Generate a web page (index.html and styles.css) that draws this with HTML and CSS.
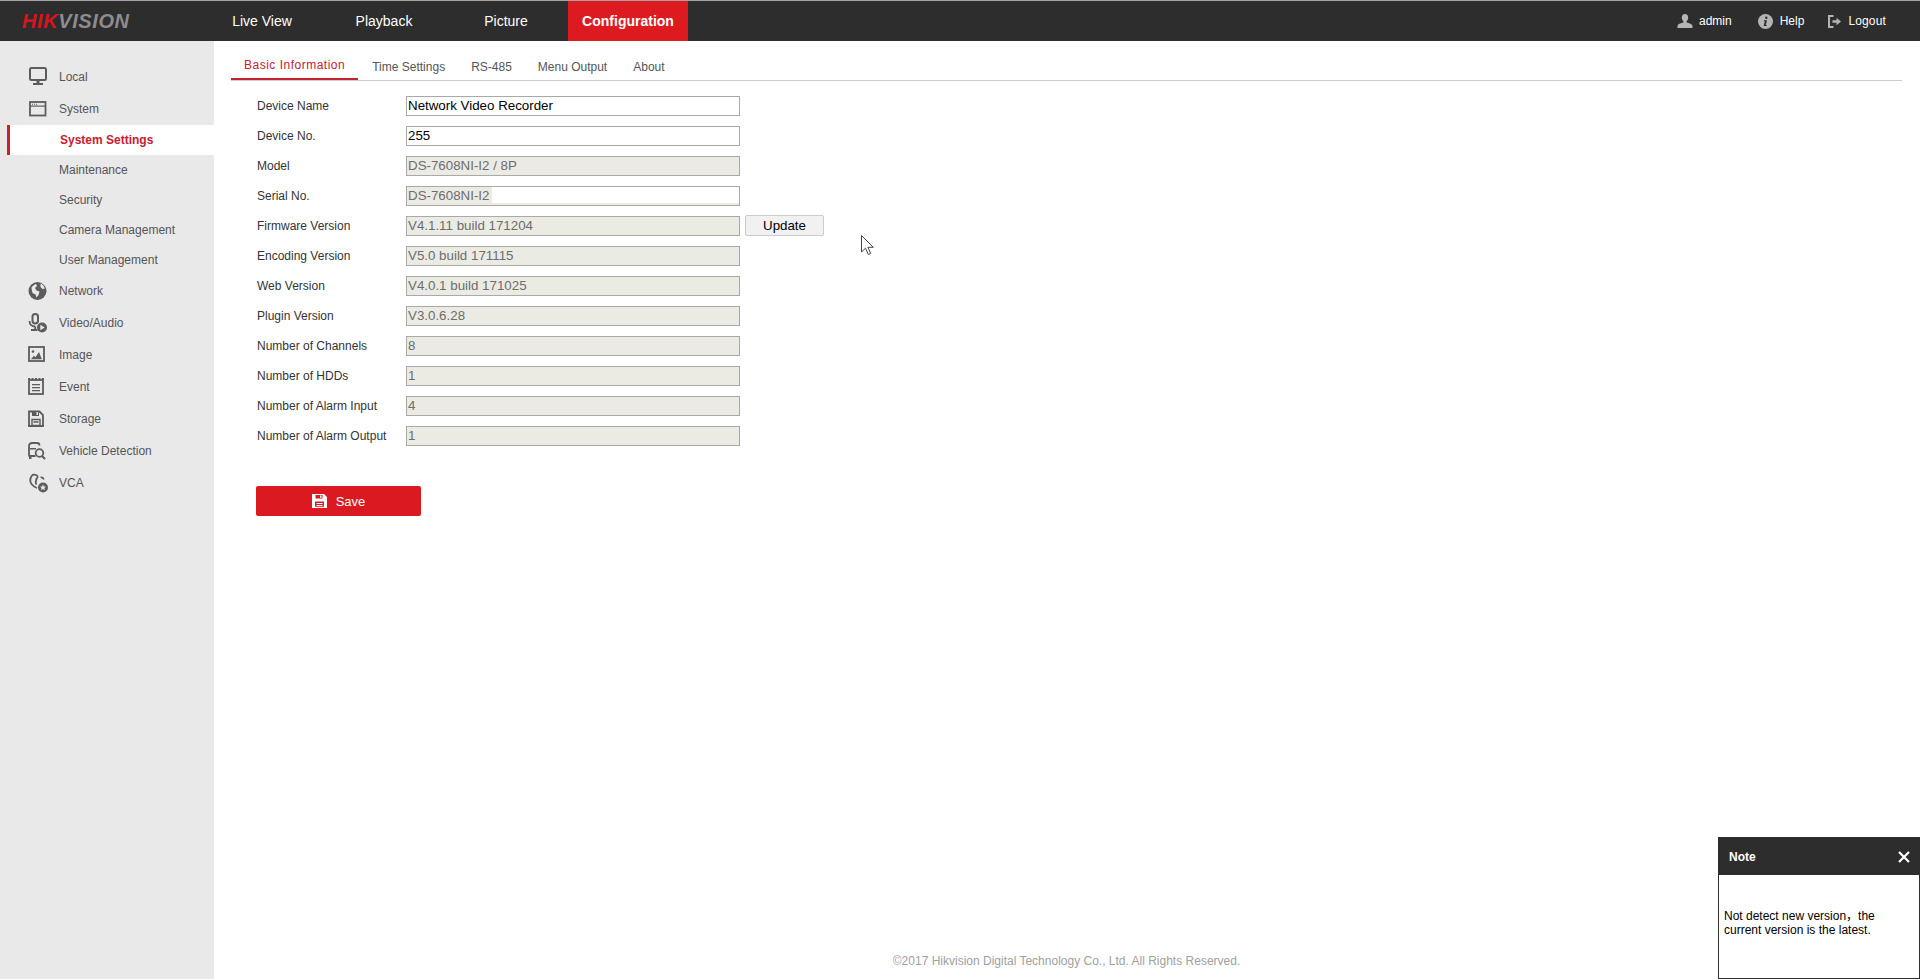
FILE: index.html
```html
<!DOCTYPE html>
<html lang="en">
<head>
<meta charset="utf-8">
<title>Configuration</title>
<link rel="stylesheet" href="styles.css">
</head>
<body>
<header class="topbar">
  <div class="logo"><span class="logo-red">HIK</span><span class="logo-grey">VISION</span></div>
  <nav class="mainnav">
    <a class="mainnav-item">Live View</a>
    <a class="mainnav-item">Playback</a>
    <a class="mainnav-item">Picture</a>
    <a class="mainnav-item mainnav-active">Configuration</a>
  </nav>
  <div class="usernav">
    <span class="usernav-item usernav-admin">
      <svg class="usernav-icon" width="16" height="14" viewBox="0 0 16 14"><path fill="#b4b4b4" d="M8 0c2 0 3.2 1.5 3.2 3.6 0 1.6-.7 3-1.6 3.7v1.1c2.6.8 5.9 1.6 5.9 3.6v2H.5v-2c0-2 3.300-2.800 5.900-3.600V7.300C5.500 6.600 4.800 5.200 4.800 3.600 4.800 1.500 6 0 8 0z"/></svg>admin
    </span>
    <span class="usernav-item usernav-help">
      <svg class="usernav-icon" width="15" height="15" viewBox="0 0 15 15"><circle cx="7.500" cy="7.500" r="7.500" fill="#b4b4b4"/><circle cx="8.300" cy="3.800" r="1.200" fill="#2d2d2d"/><path fill="#2d2d2d" d="M6 6.200h3l-1.200 4.700h1L8.500 12H5.700l1.100-4.800h-1z"/></svg>Help
    </span>
    <span class="usernav-item usernav-logout">
      <svg class="usernav-icon" width="13" height="13" viewBox="0 0 13 13"><path fill="none" stroke="#b4b4b4" stroke-width="2" d="M5.500 1H1v11h4.500"/><path fill="#b4b4b4" d="M4.500 5.200h4V2.800l4.500 3.700-4.500 3.700V7.800h-4z"/></svg>Logout
    </span>
  </div>
</header>
<div class="layout">
  <aside class="sidebar">
    <a class="side-item">
      <svg class="side-icon" width="20" height="20" viewBox="0 0 20 20"><rect x="2" y="1" width="16" height="12" rx="1.500" fill="none" stroke="#5c5c5c" stroke-width="2"/><path fill="#5c5c5c" d="M8.500 14h3v2h-3zM5 16h10v2H5z"/></svg>
      Local
    </a>
    <a class="side-item">
      <svg class="side-icon" width="20" height="20" viewBox="0 0 20 20"><rect x="2" y="3" width="15.500" height="13.500" fill="none" stroke="#5c5c5c" stroke-width="1.800"/><path fill="#5c5c5c" d="M2 6.500h16v1.200H2z"/><path fill="#5c5c5c" d="M4 4.800h1v1H4zM6 4.800h1v1H6zM8 4.800h1v1H8z"/></svg>
      System
    </a>
    <a class="side-sub side-sub-active">System Settings</a>
    <a class="side-sub">Maintenance</a>
    <a class="side-sub">Security</a>
    <a class="side-sub">Camera Management</a>
    <a class="side-sub">User Management</a>
    <a class="side-item">
      <svg class="side-icon" width="20" height="20" viewBox="0 0 20 20"><circle cx="9.500" cy="10" r="9" fill="#5c5c5c"/><path fill="#e9e9e9" d="M3.500 6.500c1.500-2 3-3 4.500-3.500l1 2-2 2 1.500 2.500 3 1-1 3.500-2 2.500-1-3-3-1.500-.8-3.500zM12.500 2.500l2.500 1.500 2 3.500-2.500.5-2-2z"/></svg>
      Network
    </a>
    <a class="side-item">
      <svg class="side-icon" width="20" height="20" viewBox="0 0 20 20"><rect x="4.500" y="1" width="5.500" height="9.500" rx="2.700" fill="none" stroke="#5c5c5c" stroke-width="2"/><path fill="none" stroke="#5c5c5c" stroke-width="1.800" d="M1.500 8c0 3.500 2.500 5.500 5.700 5.500M7.200 13.500v2.500M3 17h6.500"/><circle cx="14" cy="14.500" r="5" fill="#5c5c5c"/><path fill="#e9e9e9" d="M12.300 11.800l4.400 2.700-4.400 2.700z"/></svg>
      Video/Audio
    </a>
    <a class="side-item">
      <svg class="side-icon" width="20" height="20" viewBox="0 0 20 20"><rect x="1" y="2" width="15" height="14" fill="none" stroke="#5c5c5c" stroke-width="1.800"/><circle cx="5" cy="6.500" r="1.300" fill="#5c5c5c"/><path fill="#5c5c5c" d="M2.800 14.200l3.200-3.500 1.500 1.500 3.500-5.200 2.800 7.200z"/></svg>
      Image
    </a>
    <a class="side-item">
      <svg class="side-icon" width="20" height="20" viewBox="0 0 20 20"><rect x="1" y="3" width="14" height="14" fill="none" stroke="#5c5c5c" stroke-width="1.800"/><path fill="#5c5c5c" d="M.1 1h2v2h-2zM3.500 1h2v2h-2zM7 1h2v2H7zM10.500 1h2v2h-2zM13.900 1h2v2h-2zM4 7h8v1.300H4zM4 10h8v1.300H4zM4 13h8v1.300H4z"/></svg>
      Event
    </a>
    <a class="side-item">
      <svg class="side-icon" width="20" height="20" viewBox="0 0 20 20"><path fill="none" stroke="#5c5c5c" stroke-width="1.800" d="M1 2.500h10.500l3.500 3.500v11H1z"/><path fill="#5c5c5c" d="M4 2h7v5H4z"/><path fill="#e9e9e9" d="M8.500 3H10v3H8.500z"/><path fill="none" stroke="#5c5c5c" stroke-width="1.400" d="M4 10.500h8v6H4zM5.500 13h5"/></svg>
      Storage
    </a>
    <a class="side-item">
      <svg class="side-icon" width="20" height="20" viewBox="0 0 20 20"><path fill="none" stroke="#5c5c5c" stroke-width="1.800" d="M1 14.500V5c0-2 1.500-3 3-3h5c1.500 0 2.500 1 2.500 2.500"/><path fill="#5c5c5c" d="M2 7h6v1.500H2zM.5 14h7v2h-7zM1 16h2.500v2H1z"/><circle cx="11.500" cy="12" r="3.800" fill="none" stroke="#5c5c5c" stroke-width="1.800"/><path stroke="#5c5c5c" stroke-width="2" d="M14 15l3 3"/></svg>
      Vehicle Detection
    </a>
    <a class="side-item">
      <svg class="side-icon" width="20" height="20" viewBox="0 0 20 20"><path fill="none" stroke="#5c5c5c" stroke-width="1.800" d="M10 3.500C8 1.500 5 1 4 2.500 2.500 4.500 1.500 8 3.500 11c1.500 2 4 3.500 5.500 4M12.500 4.500c1.500-.5 3 .5 3 2M10 3.500C8 6 7 9 8.500 11.500"/><circle cx="15" cy="14.500" r="5" fill="#5c5c5c"/><path fill="#e9e9e9" d="M15 11.500l.9 2 2.200.2-1.700 1.400.6 2.200-2-1.200-2 1.200.6-2.200-1.700-1.400 2.200-.2z"/></svg>
      VCA
    </a>
  </aside>
  <main class="content">
    <div class="tabs">
      <a class="tab tab-active">Basic Information</a>
      <a class="tab">Time Settings</a>
      <a class="tab">RS-485</a>
      <a class="tab">Menu Output</a>
      <a class="tab">About</a>
    </div>
    <form class="form">
      <div class="row"><span class="label">Device Name</span><div class="field">Network Video Recorder</div></div>
      <div class="row"><span class="label">Device No.</span><div class="field">255</div></div>
      <div class="row"><span class="label">Model</span><div class="field field-off">DS-7608NI-I2 / 8P</div></div>
      <div class="row"><span class="label">Serial No.</span><div class="field field-serial"><span class="field-serial-text">DS-7608NI-I2</span></div></div>
      <div class="row"><span class="label">Firmware Version</span><div class="field field-off">V4.1.11 build 171204</div><button class="update" type="button">Update</button></div>
      <div class="row"><span class="label">Encoding Version</span><div class="field field-off">V5.0 build 171115</div></div>
      <div class="row"><span class="label">Web Version</span><div class="field field-off">V4.0.1 build 171025</div></div>
      <div class="row"><span class="label">Plugin Version</span><div class="field field-off">V3.0.6.28</div></div>
      <div class="row"><span class="label">Number of Channels</span><div class="field field-off">8</div></div>
      <div class="row"><span class="label">Number of HDDs</span><div class="field field-off">1</div></div>
      <div class="row"><span class="label">Number of Alarm Input</span><div class="field field-off">4</div></div>
      <div class="row"><span class="label">Number of Alarm Output</span><div class="field field-off">1</div></div>
      <button class="save" type="button">
        <svg width="15" height="14" viewBox="0 0 15 14"><path fill="#fff" fill-rule="evenodd" d="M0 0h12l3 3v11H0zM3.500 1v3.500h7V1zM8 1.500h1.500v2.300H8zM3 7.500v5.200h9V7.500zM4.500 9h6v1h-6zM4.500 11h6v1h-6z"/></svg>
        Save
      </button>
    </form>
    <footer class="footer">©2017 Hikvision Digital Technology Co., Ltd. All Rights Reserved.</footer>
  </main>
</div>
<svg class="cursor" width="13" height="21" viewBox="0 0 13 21"><path fill="#fff" stroke="#444" stroke-width="1" d="M.5.500v16.500l4-3.800 2.800 6.300 2.400-1-2.800-6.200h5.400z"/></svg>
<aside class="note">
  <div class="note-head"><span class="note-title">Note</span><svg width="12" height="12" viewBox="0 0 12 12"><path stroke="#fff" stroke-width="2.200" d="M1 1l10 10M11 1L1 11"/></svg></div>
  <div class="note-body">Not detect new version，the current version is the latest.</div>
</aside>
</body>
</html>
```
FILE: styles.css
```css
* { box-sizing: border-box; }
html, body { margin: 0; height: 100%; }
body {
  height: 979px;
  overflow: hidden;
  background: #fff;
  font: 12px/14px "Liberation Sans", Arial, "Noto Sans CJK SC", sans-serif;
  color: #333;
  display: flex;
  flex-direction: column;
  position: relative;
}
.topbar {
  flex: none;
  height: 41px;
  background: #2d2d2d;
  border-top: 1px solid #a3a3a3;
  display: flex;
  align-items: stretch;
  color: #fff;
}
.logo {
  width: 202px;
  padding-left: 22px;
  display: flex;
  align-items: center;
  font-weight: bold;
  font-style: italic;
  font-size: 20px;
  letter-spacing: 0.600px;
}
.logo-red { color: #d5161d; }
.logo-grey { color: #8c8c8c; }
.mainnav { display: flex; gap: 2px; }
.mainnav-item {
  width: 120px;
  display: flex;
  align-items: center;
  justify-content: center;
  font-size: 14px;
}
.mainnav-active { background: #dc1a20; font-weight: bold; }
.usernav { margin-left: auto; display: flex; align-items: center; padding-right: 34px; }
.usernav-item { display: flex; align-items: center; }
.usernav-icon { display: block; }
.usernav-admin .usernav-icon { margin-right: 6px; }
.usernav-help { margin-left: 26px; }
.usernav-help .usernav-icon { margin-right: 7px; }
.usernav-logout { margin-left: 24px; letter-spacing: 0.150px; }
.usernav-logout .usernav-icon { margin-right: 7px; }
.layout { flex: 1; display: flex; min-height: 0; }
.sidebar {
  flex: none;
  width: 214px;
  background: #e9e9e9;
  padding-top: 20px;
  color: #555;
}
.side-item {
  height: 32px;
  padding-left: 28px;
  display: flex;
  align-items: center;
}
.side-icon { flex: none; margin-right: 11px; }
.side-sub {
  height: 30px;
  padding-left: 59px;
  display: flex;
  align-items: center;
}
.side-sub-active {
  margin-left: 7px;
  padding-left: 50px;
  border-left: 3px solid #c8202f;
  background: #fff;
  color: #c8202f;
  font-weight: bold;
}
.content {
  flex: 1;
  min-width: 0;
  padding: 0 18px 0 17px;
  display: flex;
  flex-direction: column;
}
.tabs {
  flex: none;
  height: 40px;
  display: flex;
  align-items: flex-end;
  border-bottom: 1px solid #ccc;
}
.tab {
  padding: 0 13px 6px;
  color: #555;
}
.tab-active {
  margin-right: 1px;
  color: #c8202f;
  border-bottom: 2px solid #c8202f;
  letter-spacing: 0.500px;
}
.form {
  padding: 15px 0 0 26px;
  display: flex;
  flex-direction: column;
  gap: 10px;
}
.row { display: flex; align-items: center; height: 20px; color: #333; }
.label { width: 149px; flex: none; }
.field {
  width: 334px;
  height: 20px;
  border: 1px solid #a9a9a9;
  padding-left: 1px;
  font-size: 13.330px;
  line-height: 18px;
  color: #000;
  background: #fff;
}
.field-off { background: #ebebe4; color: #6d6d6d; }
.field-serial { color: #6d6d6d; box-shadow: inset 0 -2px 0 #ebebe4; }
.field-serial-text { display: inline-block; background: #ebebe4; margin-left: -1px; padding-left: 1px; padding-right: 2px; }
.update {
  width: 79px;
  height: 21px;
  margin: -1px 0 0 5px;
  padding: 0;
  border: 1px solid #ccc;
  border-radius: 2px;
  background: #f1f1f1;
  font: 13.330px "Liberation Sans", Arial, sans-serif;
  color: #000;
}
.save {
  align-self: flex-start;
  width: 165px;
  height: 30px;
  margin-top: 30px;
  margin-left: -1px;
  border: 0;
  border-radius: 2px;
  background: #da1a20;
  color: #fff;
  font: 13px "Liberation Sans", Arial, sans-serif;
  display: flex;
  align-items: center;
  justify-content: center;
  gap: 9px;
}
.footer {
  margin-top: auto;
  height: 25px;
  text-align: center;
  color: #a0a0a0;
}
.cursor { position: absolute; left: 861px; top: 235px; }
.note {
  position: absolute;
  right: 0;
  bottom: 0;
  width: 202px;
  height: 142px;
  border: 1px solid #2d2d2d;
  background: #fff;
  display: flex;
  flex-direction: column;
  color: #000;
}
.note-head {
  flex: none;
  height: 37px;
  background: #2d2d2d;
  color: #fff;
  font-weight: bold;
  display: flex;
  align-items: center;
  justify-content: space-between;
  padding: 0 9px 0 10px;
}
.note-body { flex: 1; display: flex; align-items: center; padding: 0 6px 8px 5px; }
```
